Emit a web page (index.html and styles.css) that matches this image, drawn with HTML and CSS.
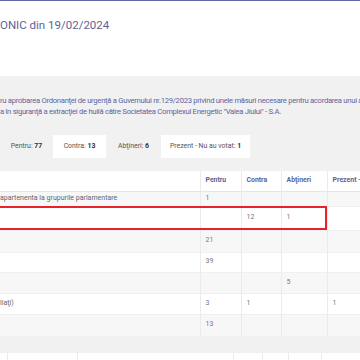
FILE: index.html
```html
<!DOCTYPE html>
<html lang="ro">
<head>
  <meta charset="UTF-8">
  <title>Vot electronic</title>
  <link rel="stylesheet" href="styles.css">
</head>
<body>

  <div class="page-head">
    <h1 class="vote-title">ONIC din 19/02/2024</h1>
  </div>

  <div class="page-body">
    <p class="vote-desc">ru aprobarea Ordonanţei de urgenţă a Guvernului nr.129/2023 privind unele măsuri necesare pentru acordarea unui ajutor<br>a în siguranţă a extracţiei de huilă către Societatea Complexul Energetic "Valea Jiului" - S.A.</p>

    <div class="tabs">
      <div class="tab">Pentru: <b>77</b></div>
      <div class="tab on">Contra: <b>13</b></div>
      <div class="tab">Abţineri: <b>6</b></div>
      <div class="tab on">Prezent - Nu au votat: <b>1</b></div>
    </div>

    <div class="table-wrap">
      <table class="groups">
        <thead>
          <tr>
            <th class="c-name"></th>
            <th class="c-for">Pentru</th>
            <th class="c-against">Contra</th>
            <th class="c-abst">Abţineri</th>
            <th class="c-present">Prezent - Nu au votat</th>
          </tr>
        </thead>
        <tbody>
          <tr class="r1"><td>apartenenta la grupurile parlamentare</td><td>1</td><td></td><td></td><td></td></tr>
          <tr class="r2"><td></td><td></td><td>12</td><td>1</td><td></td></tr>
          <tr class="r3"><td></td><td>21</td><td></td><td></td><td></td></tr>
          <tr class="r4"><td></td><td>39</td><td></td><td></td><td></td></tr>
          <tr class="r5"><td></td><td></td><td></td><td>5</td><td></td></tr>
          <tr class="r6"><td>liaţi)</td><td>3</td><td>1</td><td></td><td>1</td></tr>
          <tr class="r7"><td></td><td>13</td><td></td><td></td><td></td></tr>
        </tbody>
      </table>
      <div class="mark"></div>
    </div>

    <div class="gap"></div>

    <table class="next">
      <tr><td class="n1"></td><td class="n2"></td><td class="n3"></td><td class="n4"></td><td class="n5"></td><td class="n6"></td><td></td></tr>
    </table>
  </div>

</body>
</html>
```

FILE: styles.css
```css
* { margin: 0; padding: 0; box-sizing: border-box; }
html, body {
  width: 360px;
  height: 360px;
  overflow: hidden;
  background: #fff;
  font-family: Roboto, "Liberation Sans", sans-serif;
}
.page-head {
  height: 76px;
  border-top: 1px solid #5f6aa6;
  padding-top: 15px;
}
.vote-title {
  font-size: 11.5px;
  font-weight: 400;
  line-height: 18px;
  color: #5d6494;
  white-space: nowrap;
}
.page-body {
  background: #f1f1f1;
  padding-top: 19px;
}
.vote-desc {
  font-size: 7.7px;
  letter-spacing: -0.3px;
  line-height: 11px;
  color: #5d66a0;
  white-space: nowrap;
  overflow: hidden;
}
.tabs {
  display: flex;
  margin-top: 18px;
  height: 23px;
}
.tab {
  font-size: 6.9px;
  line-height: 23px;
  text-align: center;
  color: #555;
  white-space: nowrap;
}
.tab b { font-weight: 700; color: #333; }
.tab:nth-child(1) { width: 53px; }
.tab:nth-child(2) { width: 53px; }
.tab:nth-child(3) { width: 55px; }
.tab:nth-child(4) { width: 89px; }
.tab.on { background: #fff; }
.table-wrap {
  position: relative;
  margin-top: 13px;
  width: 420px;
}
.groups {
  width: 420px;
  border-collapse: collapse;
  table-layout: fixed;
  background: #fff;
}
.groups th, .groups td {
  padding: 0 0 2px 5px;
  text-align: left;
  vertical-align: middle;
  border-left: 1px solid #ebebeb;
  white-space: nowrap;
  overflow: hidden;
}
.groups th:first-child, .groups td:first-child {
  border-left: 0;
  padding-left: 0;
}
.groups th {
  height: 20px;
  font-size: 6.9px;
  font-weight: 700;
  color: #5d6494;
  border-bottom: 1px solid #e6e6e6;
}
.groups td {
  font-size: 7px;
  color: #777;
}
.groups td:first-child { color: #666; }
.c-name { width: 200px; }
.c-for { width: 41px; }
.c-against { width: 40px; }
.c-abst { width: 46px; }
.groups tbody tr:nth-child(odd) { background: #f7f7f7; }
.groups tbody tr { border-bottom: 1px solid #f0f0f0; }
.r1 td { height: 15px; }
.r2 td { height: 24px; }
.r3 td { height: 22px; }
.r4 td { height: 20px; }
.r5 td { height: 21px; }
.r6 td { height: 21px; }
.r7 td { height: 22px; }
.mark {
  position: absolute;
  top: 35px;
  left: -4px;
  width: 331px;
  height: 24px;
  border: 2px solid #e8222b;
}
.gap { height: 16px; }
.next {
  width: 420px;
  border-collapse: collapse;
  table-layout: fixed;
  background: #fff;
}
.next td {
  height: 20px;
  border-left: 1px solid #ebebeb;
}
.next td:first-child { border-left: 0; }
.n1 { width: 7px; }
.n2 { width: 70px; }
.n3 { width: 156px; }
.n4 { width: 29px; }
.n5 { width: 26px; }
.n6 { width: 33px; }
```
